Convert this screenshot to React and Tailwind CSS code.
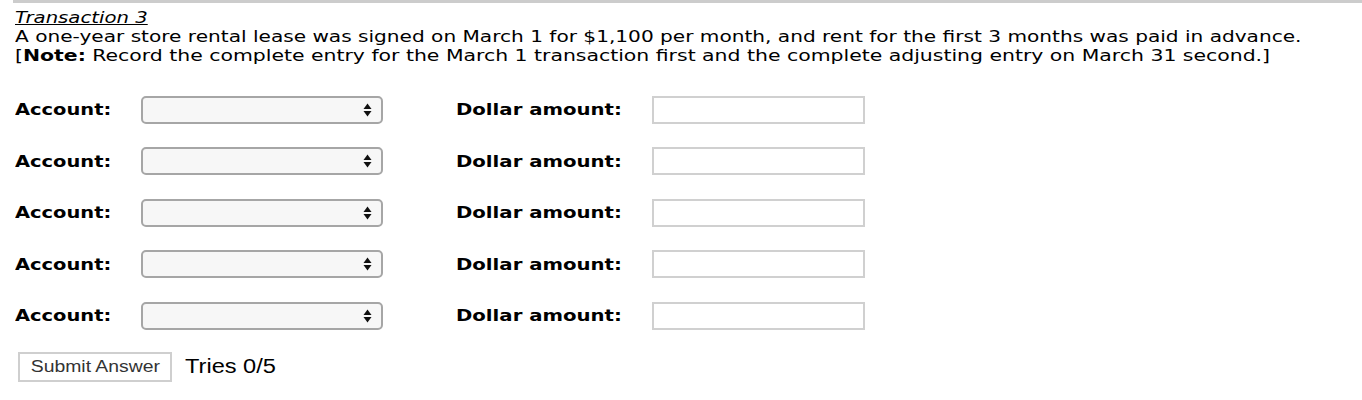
import React from "react";

function Arrows() {
  return (
    <svg width="9" height="14" viewBox="0 0 9 14" className="absolute right-[9px] top-1/2 -translate-y-1/2">
      <path d="M4.5 0.5 L8.5 6 L0.5 6 Z" fill="#111" />
      <path d="M4.5 13.5 L8.5 8 L0.5 8 Z" fill="#111" />
    </svg>
  );
}

function Row() {
  return (
    <div className="flex items-center h-[51.5px]">
      <div className="w-[126px] font-bold text-[16px] text-black">
        <span className="inline-block origin-left scale-x-[1.215] whitespace-nowrap">Account:</span>
      </div>
      <div className="relative w-[242px] h-[28px] rounded-[5px] border-2 border-[#a6a6a6] bg-[#f7f7f7]">
        <Arrows />
      </div>
      <div className="ml-[73px] w-[196px] font-bold text-[16px] text-black">
        <span className="inline-block origin-left scale-x-[1.23] whitespace-nowrap">Dollar amount:</span>
      </div>
      <div className="w-[213px] h-[28px] border-2 border-[#d0d0d0] bg-white"></div>
    </div>
  );
}

export default function App() {
  return (
    <div className="bg-white w-[1362px] h-[400px] overflow-hidden" style={{ fontFamily: '"DejaVu Sans", Verdana, sans-serif' }}>
      <div className="ml-[13px] h-[3px] bg-[#cccccc]"></div>
      <div className="pl-[15px] pt-[5px] text-[16px] leading-[19px] text-black">
        <div>
          <span className="inline-block origin-left scale-x-[1.23] whitespace-nowrap italic underline">Transaction 3</span>
        </div>
        <div>
          <span className="inline-block origin-left scale-x-[1.256] whitespace-nowrap">A one-year store rental lease was signed on March 1 for $1,100 per month, and rent for the first 3 months was paid in advance.</span>
        </div>
        <div>
          <span className="inline-block origin-left scale-x-[1.275] whitespace-nowrap">[<span className="font-bold">Note:</span> Record the complete entry for the March 1 transaction first and the complete adjusting entry on March 31 second.]</span>
        </div>
        <div className="mt-[19px]">
          <Row />
          <Row />
          <Row />
          <Row />
          <Row />
        </div>
        <div className="flex items-center mt-[10px] ml-[3px]" style={{ fontFamily: '"Liberation Sans", Arial, sans-serif' }}>
          <div className="w-[154px] h-[30px] border-2 border-[#cfcfcf] flex items-center justify-center text-[16px] text-[#333]">
            <span className="inline-block scale-x-[1.21] whitespace-nowrap">Submit Answer</span>
          </div>
          <div className="ml-[13px] text-[20px] text-black">
            <span className="inline-block origin-left scale-x-[1.18] whitespace-nowrap">Tries 0/5</span>
          </div>
        </div>
      </div>
    </div>
  );
}
